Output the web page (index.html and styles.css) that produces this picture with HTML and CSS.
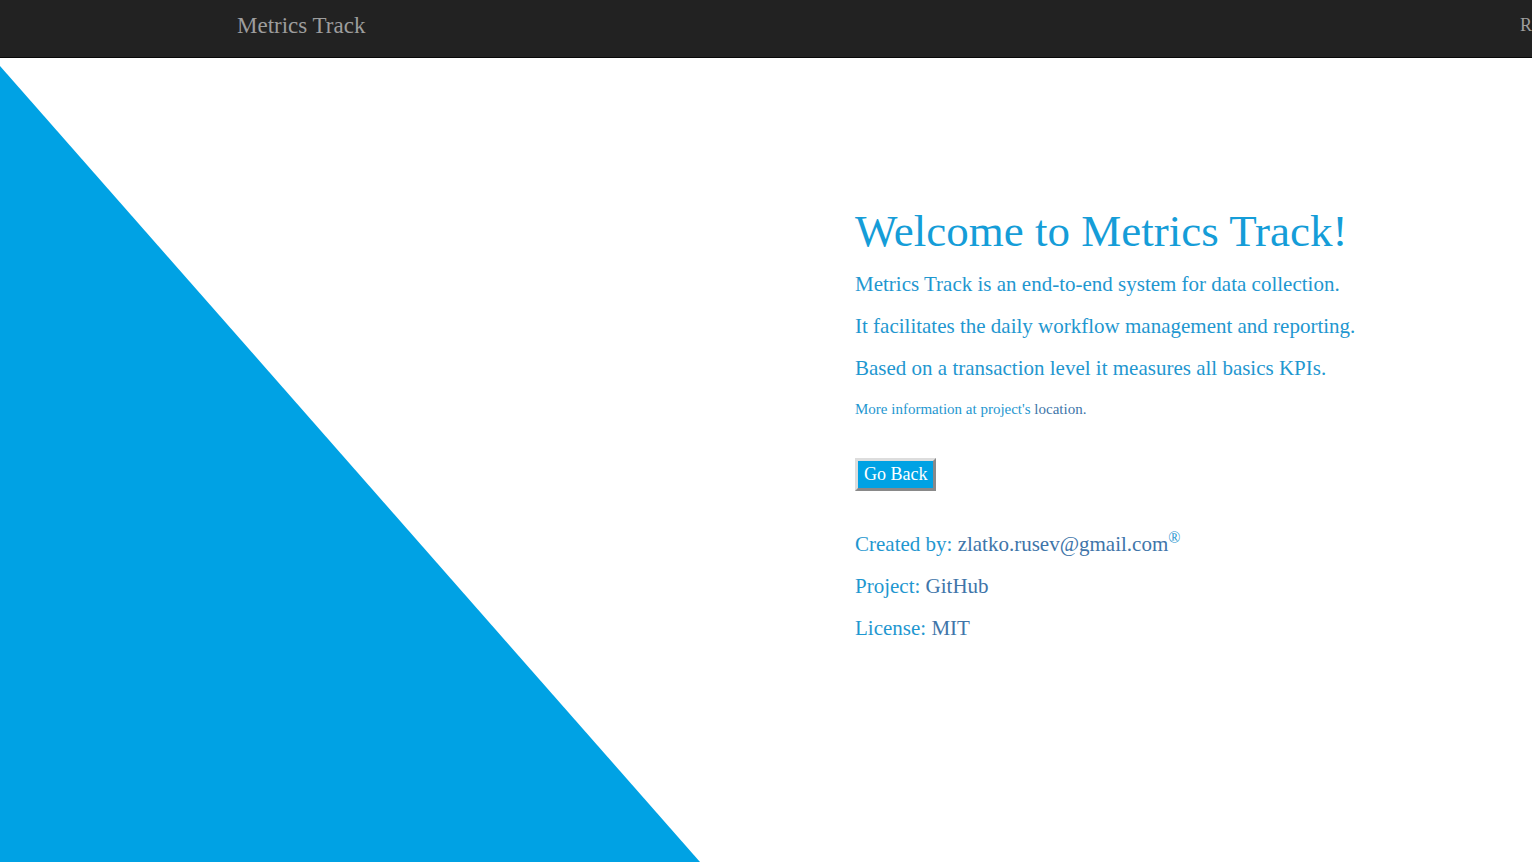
FILE: index.html
```html
<!DOCTYPE html>
<html lang="en">
<head>
<meta charset="utf-8">
<title>Metrics Track</title>
<link rel="stylesheet" href="styles.css">
</head>
<body>
<nav class="navbar">
  <a class="brand" href="#">Metrics Track</a>
  <a class="nav-link" href="#">R</a>
</nav>
<main class="hero">
  <div class="wedge"></div>
  <section class="content">
    <h1 class="title">Welcome to Metrics Track!</h1>
    <p class="line">Metrics Track is an end-to-end system for data collection.</p>
    <p class="line">It facilitates the daily workflow management and reporting.</p>
    <p class="line">Based on a transaction level it measures all basics KPIs.</p>
    <p class="note">More information at project's <a class="link" href="#">location.</a></p>
    <button class="back" type="button">Go Back</button>
    <p class="line">Created by: <a class="link" href="#">zlatko.rusev@gmail.com</a><sup class="mark">®</sup></p>
    <p class="line">Project: <a class="link" href="#">GitHub</a></p>
    <p class="line">License: <a class="link" href="#">MIT</a></p>
  </section>
</main>
</body>
</html>
```
FILE: styles.css
```css
* { box-sizing: border-box; }
body {
  margin: 0;
  min-height: 100vh;
  display: flex;
  flex-direction: column;
  background: #fff;
  color: #1f97d0;
  font-family: "Liberation Serif", "Times New Roman", serif;
}
.navbar {
  display: flex;
  justify-content: space-between;
  padding: 0 0 5px 237px;
  background: #222;
  border-bottom: 1px solid #080808;
}
.brand, .nav-link { color: #9d9d9d; text-decoration: none; }
.brand { font-size: 23px; line-height: 52px; }
.nav-link { font-size: 18px; line-height: 50px; }
.hero {
  flex: 1;
  display: grid;
  grid-template-columns: 700fr 832fr;
  padding-top: 8px;
}
.wedge {
  background: #00a2e4;
  clip-path: polygon(0 0, 100% 100%, 0 100%);
}
.content { padding: 140px 0 0 155px; }
.title { margin: 0 0 13px; font-size: 45px; font-weight: 400; line-height: 50px; color: #159dd8; }
.line { margin: 0 0 12px; font-size: 21px; line-height: 30px; }
.note { margin: 0 0 34px; font-size: 15px; line-height: 29px; }
.link { color: #4075a9; text-decoration: none; }
.mark { font-size: 16px; line-height: 0; }
.back {
  display: block;
  margin-bottom: 38px;
  padding: 3px 6px;
  border: 3px outset #ddd;
  background: #00a2e4;
  color: #fff;
  font: 18px/21px "Liberation Serif", "Times New Roman", serif;
}
```
